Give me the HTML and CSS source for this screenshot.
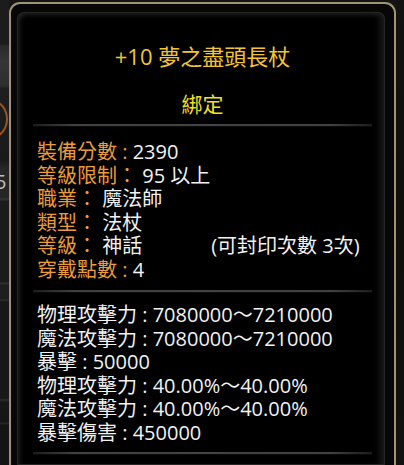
FILE: index.html
```html
<!DOCTYPE html>
<html lang="zh-Hant">
<head>
<meta charset="utf-8">
<title>夢之盡頭長杖</title>
<link rel="stylesheet" href="styles.css">
</head>
<body>
<div class="scene">
  <div class="side-l">
    <div class="arc"></div>
    <div class="five">5</div>
  </div>
  <div class="frame">
    <div class="panel">
      <div class="title">+10 夢之盡頭長杖</div>
      <div class="bound">綁定</div>
      <div class="sep sep-a"></div>
      <div class="sec sec-a">
        <div class="row"><span class="k">裝備分數 :</span><span class="v"> 2390</span></div>
        <div class="row"><span class="k">等級限制：</span><span class="v"> 95 以上</span></div>
        <div class="row"><span class="k">職業：</span><span class="v"> 魔法師</span></div>
        <div class="row"><span class="k">類型：</span><span class="v"> 法杖</span></div>
        <div class="row"><span class="k">等級：</span><span class="v"> 神話</span><span class="v note">(可封印次數 3次)</span></div>
        <div class="row"><span class="k">穿戴點數 :</span><span class="v"> 4</span></div>
      </div>
      <div class="sep sep-b"></div>
      <div class="sec sec-b">
        <div class="row v">物理攻擊力 : 7080000<span class="tl">～</span>7210000</div>
        <div class="row v">魔法攻擊力 : 7080000<span class="tl">～</span>7210000</div>
        <div class="row v">暴擊 : 50000</div>
        <div class="row v">物理攻擊力 : 40.00%<span class="tl">～</span>40.00%</div>
        <div class="row v">魔法攻擊力 : 40.00%<span class="tl">～</span>40.00%</div>
        <div class="row v">暴擊傷害 : 450000</div>
      </div>
      <div class="sep sep-c"></div>
    </div>
  </div>
  <div class="side-r"></div>
</div>
</body>
</html>
```
FILE: styles.css
```css
html, body {
  margin: 0;
  padding: 0;
  background: #141414;
}
body {
  width: 404px;
  height: 465px;
  overflow: hidden;
  font-family: "Open Sans", "Noto Sans CJK TC", sans-serif;
}
.scene {
  display: flex;
  height: 465px;
}
.side-l {
  position: relative;
  width: 9px;
  flex: none;
  overflow: hidden;
  background: linear-gradient(to bottom,
    #1c1c1c 0, #1c1c1c 44px, #2a2a2a 46px, #353535 60px, #2e2e2e 86px,
    #1e1e1e 88px, #1a1a1a 160px, #262626 168px, #262626 198px, #3a3a3a 199px,
    #1b1b1b 201px, #1b1b1b 282px, #333 283px, #1e1e1e 285px, #1e1e1e 299px,
    #2d2d2d 300px, #181818 302px, #181818 398px, #2c2c2c 400px, #161616 402px,
    #161616 422px, #2a2a2a 423px, #141414 425px);
}
.arc {
  position: absolute;
  left: -24px;
  top: 100px;
  width: 28px;
  height: 34px;
  border: 2px solid #9a5420;
  border-radius: 50%;
}
.five {
  position: absolute;
  left: -5px;
  top: 171px;
  font-size: 20px;
  line-height: 22px;
  color: #bdbdbd;
}
.side-r {
  flex: 1;
  background: linear-gradient(to bottom, #121212, #0f0e0b 50%, #111);
}
.frame {
  box-sizing: border-box;
  width: 387px;
  flex: none;
  margin-top: 2px;
  border: 2px solid #a29473;
  border-bottom: 0;
  border-radius: 11px 11px 0 0;
  background: #070707;
  padding: 8px 9px 0 6px;
  display: flex;
}
.panel {
  flex: 1;
  border-radius: 7px 7px 0 0;
  background: #000;
  box-shadow:
    inset 0 0 0 1px #262626,
    inset 3px 3px 4px #1d1d1d,
    inset -7px 0 6px -2px #1c1c1c;
  padding: 30px 13px 0 16px;
}
.title {
  text-align: center;
  font-size: 22px;
  line-height: 28px;
  color: #f5c434;
  white-space: pre;
}
.bound {
  margin-top: 21px;
  text-align: center;
  font-size: 21px;
  line-height: 26px;
  color: #f0e02a;
}
.sep {
  height: 2px;
  background: linear-gradient(to right, #1c1c1c, #414141 12%, #444 50%, #414141 88%, #1c1c1c);
  box-shadow: 0 1px 1px #0c0c0c;
}
.sep-a { margin-top: 7px; }
.sep-b { margin-top: 9px; }
.sep-c { margin-top: 8px; }
.sec {
  padding-left: 4px;
  font-size: 20px;
  line-height: 23.5px;
}
.sec-a { margin-top: 14px; }
.sec-b { margin-top: 11px; }
.row {
  height: 23.5px;
  white-space: pre;
}
.k {
  color: #ec9c3c;
}
.v {
  color: #f2f2f2;
}
.tl {
  font-family: "Noto Sans CJK TC", sans-serif;
  line-height: 1;
}
.note {
  margin-left: 69px;
}
```
